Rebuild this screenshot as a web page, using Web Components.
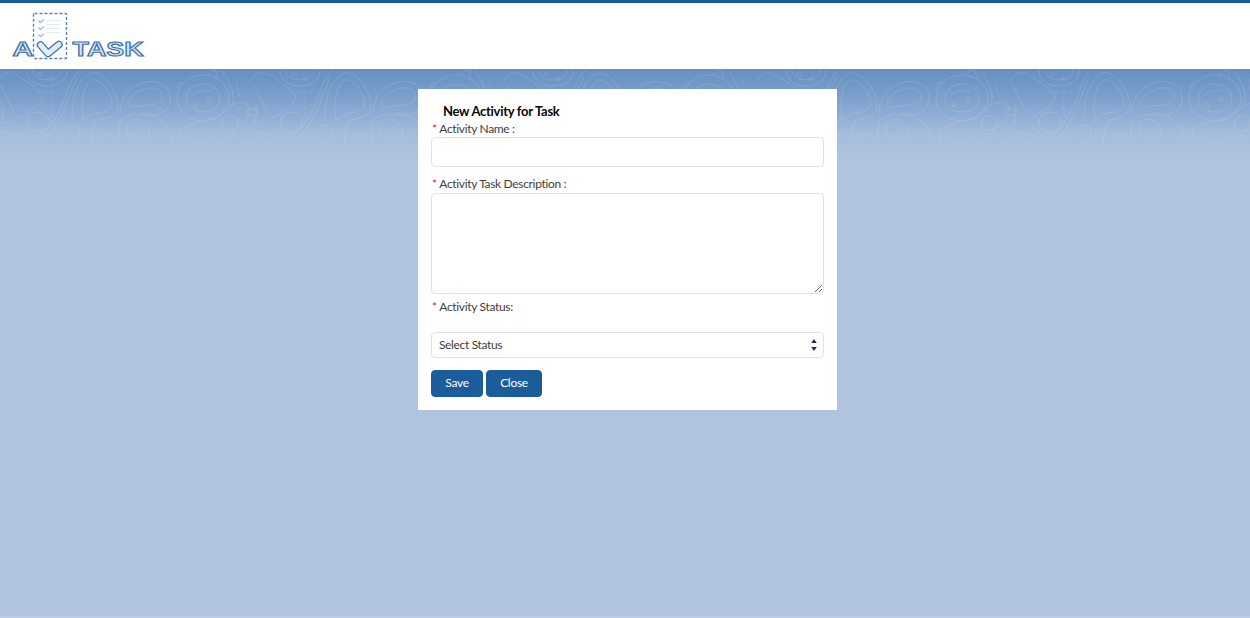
<!DOCTYPE html>
<html lang="en">
<head>
<meta charset="utf-8">
<title>New Activity for Task</title>
<style>
    html, body { margin: 0; height: 100%; }
    body { background: #b0c4df; font-family: "Lato", "Liberation Sans", sans-serif; overflow: hidden; }
</style>
</head>
<body>
<av-page>
    <av-header slot="header"><av-logo></av-logo></av-header>
    <av-activity-form heading="New Activity for Task"></av-activity-form>
</av-page>

<script>
// page shell: header on top, the contour picture lies behind the main area
class AvPage extends HTMLElement {
    constructor() {
        super();
        this.attachShadow({ mode: 'open' });
        this.shadowRoot.innerHTML = `
            <style>
                :host { display: flex; flex-direction: column; height: 618px; position: relative; }
                main { flex: 1; position: relative; padding: 20px 0 0 418px; }
                .strip { height: 2px; background: #b9cce4; }
            </style>
            <slot name="header"></slot>
            <main>
                <av-contours></av-contours>
                <slot></slot>
            </main>
            <div class="strip"></div>
        `;
    }
}

class AvHeader extends HTMLElement {
    constructor() {
        super();
        this.attachShadow({ mode: 'open' });
        this.shadowRoot.innerHTML = `
            <style>
                :host { display: block; height: 66px; background: #fff; border-top: 3px solid #1b5c9a; }
            </style>
            <slot></slot>
        `;
    }
}

class AvLogo extends HTMLElement {
    constructor() {
        super();
        this.attachShadow({ mode: 'open' });
        this.shadowRoot.innerHTML = `
            <style>
                :host { display: block; width: 150px; height: 66px; }
                svg { display: block; }
                text { font-family: "Liberation Sans", sans-serif; font-weight: 700; font-size: 21px; fill: #d6e5f5; stroke: #3a72b0; stroke-width: 1.1; }
            </style>
            <svg width="150" height="66" viewBox="0 3 150 66">
                <rect x="33.500" y="13.500" width="33" height="45" rx="1" fill="#fff" stroke="#5f7fae" stroke-width="1.400" stroke-dasharray="3 2"/>
                <g fill="none" stroke="#a9bfdc" stroke-width="1.600">
                    <path d="M38.500 20.500l2 2 3.500-3"/>
                    <path d="M38.500 27.500l2 2 3.500-3"/>
                    <path d="M38.500 34.500l2 2 3.500-3"/>
                </g>
                <path d="M46 20.500h14M46 24.500h14M46 28.500h14M46 32.500h14" stroke="#e6e9ee" stroke-width="1"/>
                <g fill="none" stroke-linecap="round" stroke-linejoin="round">
                    <path d="M40.500 45L48 53.500 59 44.500" stroke="#3a72b0" stroke-width="7.500"/>
                    <path d="M40.500 45L48 53.500 59 44.500" stroke="#e2edf8" stroke-width="5"/>
                </g>
                <text x="12.500" y="55.500" textLength="20.500" lengthAdjust="spacingAndGlyphs">A</text>
                <text x="72.500" y="55.500" textLength="71" lengthAdjust="spacingAndGlyphs">TASK</text>
            </svg>
        `;
    }
}

// repeating contour lines over the blue fade, tile is 253px wide
class AvContours extends HTMLElement {
    constructor() {
        super();
        this.attachShadow({ mode: 'open' });
        this.shadowRoot.innerHTML = `
            <style>
                :host { display: block; position: absolute; left: 0; right: 0; top: 0; height: 94px; background: linear-gradient(#6490c1 0%, #80a3ce 35%, #a6bddb 70%, #b0c4df 100%); }
                svg { display: block; filter: blur(.3px); }
            </style>
            <svg width="1250" height="94">
                <defs>
                    <linearGradient id="fade" x1="0" y1="0" x2="0" y2="1">
                        <stop offset="0" stop-color="#fff" stop-opacity=".15"/>
                        <stop offset=".65" stop-color="#fff" stop-opacity=".15"/>
                        <stop offset=".95" stop-color="#fff" stop-opacity="0"/>
                    </linearGradient>
                    <pattern id="tile" width="253" height="94" patternUnits="userSpaceOnUse">
                        <g fill="none" stroke="#fff" stroke-width=".9">
                            <path d="M-2 12C2 2 12 2 20 8C30 15 43 22 43 29C40 37 25 46 20 49C12 46 10 30-2 12Z"/>
                            <path d="M251 12C255 2 265 2 273 8"/>
                            <path d="M0 32C5 36 6 48 0 54"/>
                            <ellipse cx="47" cy="3" rx="20" ry="14"/>
                            <ellipse cx="47" cy="2" rx="14" ry="9"/>
                            <circle cx="40" cy="5" r="2"/>
                            <circle cx="52" cy="10" r="2"/>
                            <ellipse cx="38" cy="53" rx="11" ry="10"/>
                            <path d="M57 81C56 72 62 58 70 56C77 55 81 62 78 68C74 75 64 80 57 81Z"/>
                            <path d="M80 1C70 8 68 24 60 40C52 58 42 70 18 72C10 72 4 69 0 68"/>
                            <path d="M78 8C74 14 72 22 66 36C58 56 46 76 22 77C12 77 6 74 0 73"/>
                            <path d="M83 52C80 30 84 15 92 11C101 9 112 25 112 35C110 45 98 42 90 46C86 48 84 50 83 52Z"/>
                            <path d="M72 50C72 28 78 8 92 4C104 2 118 22 118 38C116 50 104 48 96 52C92 60 90 72 92 82"/>
                            <path d="M120 45C120 28 130 16 146 13C158 12 170 14 170 30C170 44 156 48 140 46C132 45 124 46 120 52C118 60 118 72 122 80"/>
                            <path d="M128 34C130 26 140 20 150 19C160 18 164 24 162 30C160 36 150 36 140 37C132 38 128 40 128 34Z"/>
                            <path d="M127 60C127 52 136 48 142 52C148 56 152 62 148 68C144 72 130 72 127 60Z"/>
                            <path d="M142 44C158 44 174 60 172 72C170 80 152 80 138 78"/>
                            <path d="M182 60C190 54 204 52 214 50C222 46 228 36 238 34C246 32 252 38 250 44C246 52 234 62 226 70C216 78 194 84 186 78C180 74 178 66 182 60Z"/>
                            <path d="M189 70C194 76 206 74 214 70" stroke-dasharray="4 3"/>
                            <ellipse cx="203" cy="29" rx="26" ry="23"/>
                            <ellipse cx="203" cy="29" rx="17" ry="14"/>
                            <path d="M178 20C178 14 180 12 184 14M208 6C210 2 213 0 216 2L218 10"/>
                            <path d="M192 26C197 24 199 20 204 23C206 18 210 24 212 21"/>
                            <circle cx="195" cy="36" r="2"/>
                            <circle cx="209" cy="30" r="2"/>
                            <ellipse cx="252" cy="43" rx="5" ry="3.500"/>
                            <ellipse cx="-1" cy="43" rx="5" ry="3.500"/>
                            <ellipse cx="230" cy="54" rx="8" ry="7.500"/>
                            <path d="M222 1C230 14 236 26 232 36"/>
                            <path d="M238 10C234 18 240 24 240 30" stroke-dasharray="4 3"/>
                            <path d="M36 22C44 24 52 24 60 22M52 30C50 40 54 46 52 54" stroke-dasharray="4 3"/>
                            <path d="M0 54C14 50 20 56 30 66" stroke-dasharray="4 3"/>
                            <path d="M0 62C20 66 34 72 50 66"/>
                            <path d="M100 70C104 62 112 64 116 72C120 80 132 86 148 82C170 78 188 90 208 86C226 82 240 74 253 72"/>
                        </g>
                    </pattern>
                    <mask id="lines">
                        <rect width="1250" height="94" fill="url(#fade)"/>
                    </mask>
                </defs>
                <rect width="1250" height="94" fill="url(#tile)" mask="url(#lines)"/>
            </svg>
        `;
    }
}

class AvField extends HTMLElement {
    constructor() {
        super();
        const kind = this.getAttribute('kind');
        const controls = {
            input: '<input type="text">',
            textarea: '<textarea></textarea>',
            select: `<div class="wrap"><select><option>Select Status</option></select>
                <svg width="8" height="14" viewBox="0 0 8 14"><path d="M4 1l2.800 4H1.200zM1.200 9h5.600L4 13z" fill="#16325c"/></svg></div>`
        };
        this.attachShadow({ mode: 'open' });
        this.shadowRoot.innerHTML = `
            <style>
                :host { display: block; font-size: 12px; letter-spacing: -.33px; color: #3e3e3c; }
                label { display: block; height: 17px; line-height: 17px; }
                abbr { color: #d8232a; text-decoration: none; margin: 0 2.500px 0 1px; }
                input, textarea, select {
                    display: block; box-sizing: border-box; width: 393px; margin: 0;
                    border: 1px solid #e2e2e2; border-radius: 4px; background: #fff;
                    color: #3e3e3c; font: 12px "Lato", "Liberation Sans", sans-serif; letter-spacing: -.35px; outline: none;
                }
                input { height: 30px; }
                textarea { height: 101px; padding: 8px 12px; resize: vertical; }
                select { height: 26px; padding: 0 7px 2px; appearance: none; -webkit-appearance: none; }
                .wrap { position: relative; width: 393px; }
                .wrap svg { position: absolute; right: 6px; top: 6px; }
                :host([kind=select]) .control { padding-top: 17px; }
                :host([kind=textarea]) .control { padding-top: 1px; }
            </style>
            <label><abbr>*</abbr><slot></slot></label>
            <div class="control">${controls[kind]}</div>
        `;
    }
}

class AvButton extends HTMLElement {
    constructor() {
        super();
        this.attachShadow({ mode: 'open' });
        this.shadowRoot.innerHTML = `
            <style>
                :host { display: inline-block; }
                button {
                    display: block; box-sizing: border-box; width: var(--w); height: 27px; padding: 0 0 2px; border: 1px solid #1b5c9a; border-radius: 4px;
                    background: #1b5c9a; color: #fff; font: 12px "Lato", "Liberation Sans", sans-serif; letter-spacing: -.3px;
                }
            </style>
            <button type="button"><slot></slot></button>
        `;
    }
}

class AvActivityForm extends HTMLElement {
    constructor() {
        super();
        this.attachShadow({ mode: 'open' });
        this.shadowRoot.innerHTML = `
            <style>
                :host { display: block; position: relative; box-sizing: border-box; width: 419px; height: 321px; padding: 13px 13px 0; background: #fff; }
                h2 { margin: 0 0 0 12px; height: 18px; line-height: 18px; font-size: 13px; font-weight: 700; letter-spacing: -.28px; color: #080707; }
                .stack { display: flex; flex-direction: column; }
                .desc { margin-top: 8px; }
                .status { margin-top: 4px; }
                .actions { display: flex; gap: 3px; margin-top: 12px; }
            </style>
            <h2>${this.getAttribute('heading')}</h2>
            <div class="stack">
                <av-field kind="input">Activity Name :</av-field>
                <av-field kind="textarea" class="desc">Activity Task Description :</av-field>
                <av-field kind="select" class="status">Activity Status:</av-field>
            </div>
            <div class="actions">
                <av-button style="--w:52px">Save</av-button>
                <av-button style="--w:56px">Close</av-button>
            </div>
        `;
    }
}

customElements.define('av-field', AvField);
customElements.define('av-button', AvButton);
customElements.define('av-contours', AvContours);
customElements.define('av-logo', AvLogo);
customElements.define('av-header', AvHeader);
customElements.define('av-activity-form', AvActivityForm);
customElements.define('av-page', AvPage);
</script>
</body>
</html>
